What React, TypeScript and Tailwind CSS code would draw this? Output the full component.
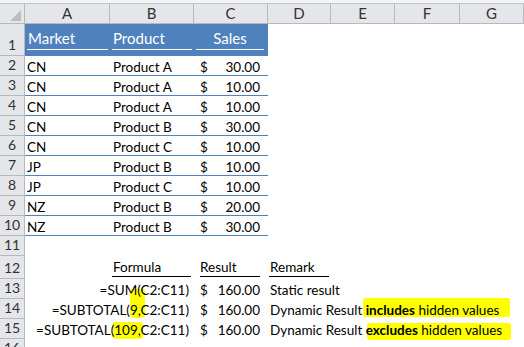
import React from 'react'

const grid = 'grid grid-cols-[25px_85px_84px_74px_63px_64px_65px_64px]'
const font = { fontFamily: 'Lato, "Liberation Sans", sans-serif' }

const data = [
  ['CN', 'Product A', '30.00'],
  ['CN', 'Product A', '10.00'],
  ['CN', 'Product A', '10.00'],
  ['CN', 'Product B', '30.00'],
  ['CN', 'Product C', '10.00'],
  ['JP', 'Product B', '10.00'],
  ['JP', 'Product C', '10.00'],
  ['NZ', 'Product B', '20.00'],
  ['NZ', 'Product B', '30.00'],
]

function RowHead({ n, h = 'h-5' }: { n?: number; h?: string }) {
  return (
    <div className={`${h} bg-[#e4e6ea] border-r border-b border-[#b6babf] flex items-end justify-center pb-[1px] text-[14px] leading-[18px] text-[#333]`}>
      {n}
    </div>
  )
}

function Money({ v }: { v: string }) {
  return (
    <div className="h-5 flex items-end justify-between pl-[6px] pr-[8px] leading-[18px]">
      <span>$</span>
      <span>{v}</span>
    </div>
  )
}

export default function App() {
  return (
    <div className="relative w-[524px] h-[347px] overflow-hidden bg-white text-[13.5px] text-black" style={font}>
      {/* marker highlights, drawn under the text */}
      <div className="absolute left-[130px] top-[289px] w-[15px] h-[29px] bg-[#ffff00] rounded-[4px]" />
      <div className="absolute left-[113px] top-[322px] w-[30px] h-[17px] bg-[#ffff00] rounded-[3px]" />
      <div className="absolute left-[363px] top-[298px] w-[147px] h-[19px] bg-[#ffff00] rounded-[3px]" />
      <div className="absolute left-[367px] top-[323px] w-[144px] h-[17px] bg-[#ffff00] rounded-[3px]" />

      <div className="relative">
        <div className="h-[4px] bg-[#f3f4f6] border-b border-[#c3c6ca]" />

        {/* column letters */}
        <div className={grid}>
          <div className="h-5 bg-[#e4e6ea] border-r border-b border-[#b6babf] relative">
            <div className="absolute left-[10px] top-[6px] w-0 h-0 border-l-[11px] border-l-transparent border-b-[11px] border-b-[#b9bcc0]" />
          </div>
          {['A', 'B', 'C', 'D', 'E', 'F', 'G'].map((c) => (
            <div key={c} className="h-5 bg-[#e4e6ea] border-r border-b border-[#b6babf] flex items-center justify-center text-[15px] text-[#333]">
              {c}
            </div>
          ))}
        </div>

        {/* row 1 - table header */}
        <div className={grid}>
          <RowHead n={1} h="h-8" />
          {['Market', 'Product'].map((t) => (
            <div key={t} className="h-8 bg-[#4f81bd] flex items-end pb-[6px] px-[2px]">
              <div className="w-full border-b border-white text-white text-[15px] leading-[18px] pl-[1px] pb-[2px]">{t}</div>
            </div>
          ))}
          <div className="h-8 bg-[#4f81bd] flex items-end pb-[6px] pl-[2px] pr-[4px]">
            <div className="w-full border-b border-white text-white text-[15px] leading-[18px] pb-[2px] text-center">Sales</div>
          </div>
        </div>

        {/* data rows */}
        {data.map((r, i) => (
          <div key={i} className={grid}>
            <RowHead n={i + 2} />
            <div className="col-span-3 grid grid-cols-[85px_84px_74px] border-b border-[#4f81bd] h-5">
              <div className="h-5 flex items-end pl-[2px] leading-[18px]">{r[0]}</div>
              <div className="h-5 flex items-end pl-[3px] leading-[18px]">{r[1]}</div>
              <Money v={r[2]} />
            </div>
          </div>
        ))}

        <div className={grid}>
          <RowHead n={11} />
        </div>

        {/* row 12 - labels */}
        <div className={grid}>
          <RowHead n={12} h="h-[23px]" />
          <div />
          <div className="h-[23px] flex items-end pb-[2px] pl-[2px] pr-[3px]">
            <div className="w-full border-b border-black leading-[18px] pl-[1px]">Formula</div>
          </div>
          <div className="h-[23px] flex items-end pb-[2px] pl-[6px] pr-[8px]">
            <div className="w-full border-b border-black leading-[18px]">Result</div>
          </div>
          <div className="h-[23px] flex items-end pb-[2px] pl-[1px] pr-[2px]">
            <div className="w-full border-b border-black leading-[18px] pl-[1px]">Remark</div>
          </div>
        </div>

        {[
          ['=SUM(C2:C11)', <>Static result</>],
          ['=SUBTOTAL(9,C2:C11)', <>Dynamic Result <b>includes</b> hidden values</>],
          ['=SUBTOTAL(109,C2:C11)', <>Dynamic Result <b>excludes</b> hidden values</>],
        ].map(([f, remark], i) => (
          <div key={i} className={grid}>
            <RowHead n={13 + i} />
            <div className="col-span-2 h-5 flex items-end justify-end pr-[5px] leading-[18px]">{f}</div>
            <Money v="160.00" />
            <div className="col-span-4 h-5 flex items-end pl-[2px] leading-[18px] whitespace-nowrap">
              <span>{remark}</span>
            </div>
          </div>
        ))}

        <div className={grid}>
          <RowHead n={16} />
        </div>
      </div>
    </div>
  )
}
